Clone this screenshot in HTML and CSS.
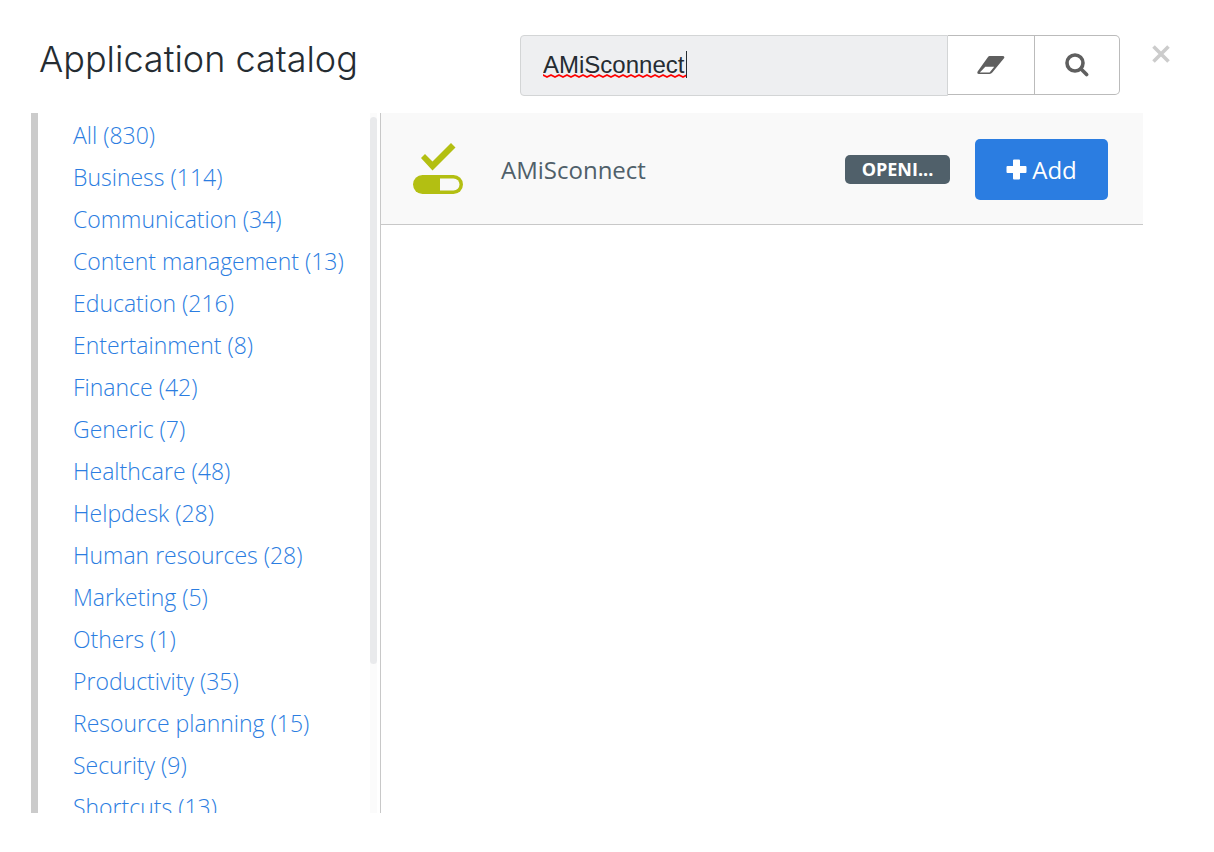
FILE: index.html
```html
<!DOCTYPE html>
<html lang="en">
<head>
    <meta charset="UTF-8">
    <meta name="viewport" content="width=device-width, initial-scale=1.0">
    <title>Application catalog</title>
    <link rel="stylesheet" href="styles.css">
</head>
<body>

    <div class="catalog">
        <header class="catalog-header">
            <h1>Application catalog</h1>
            <form class="search" role="search">
                <div class="search-field">
                    <input type="text" class="search-input" aria-label="Search applications" value="AMiSconnect">
                    <svg class="squiggle" aria-hidden="true">
                        <defs>
                            <pattern id="wave" width="8" height="4" patternUnits="userSpaceOnUse">
                                <path d="M-4 3L0 1L4 3L8 1L12 3" fill="none" stroke="#f00" stroke-width="1.8" stroke-linejoin="round"/>
                            </pattern>
                        </defs>
                        <rect width="100%" height="4" fill="url(#wave)"/>
                    </svg>
                    <span class="caret"></span>
                </div>
                <button type="button" class="search-btn" aria-label="Clear">
                    <svg width="28" height="20" viewBox="0 0 28 20">
                        <path d="M12.6 1H25.5Q28.4 1.2 26.8 3.6L15.3 17.6Q14.2 19 12.5 19H2Q-.6 18.6.8 16.2L11 2Q11.7 1 12.6 1ZM8.3 11.7L2.8 17.5H12.6L17.2 11.7Z" fill="#5f5f5f" fill-rule="evenodd"/>
                    </svg>
                </button>
                <button type="submit" class="search-btn search-btn-last" aria-label="Search">
                    <svg width="24" height="24" viewBox="0 0 24 24" fill="none" stroke="#5f5f5f">
                        <circle cx="10" cy="10" r="8" stroke-width="3.6"/>
                        <path d="M15.8 15.8L21.6 21.6" stroke-width="3.6" stroke-linecap="round"/>
                    </svg>
                </button>
            </form>
            <button type="button" class="close-btn" aria-label="Close">
                <svg width="18" height="18" viewBox="0 0 18 18">
                    <path d="M1.5 1.5L16.5 16.5M16.5 1.5L1.5 16.5" stroke="#ccc" stroke-width="3.6"/>
                </svg>
            </button>
        </header>

        <div class="catalog-body">
            <nav class="categories" aria-label="Categories">
                <ul class="category-list">
                    <li><a href="#">All (830)</a></li>
                    <li><a href="#">Business (114)</a></li>
                    <li><a href="#">Communication (34)</a></li>
                    <li><a href="#">Content management (13)</a></li>
                    <li><a href="#">Education (216)</a></li>
                    <li><a href="#">Entertainment (8)</a></li>
                    <li><a href="#">Finance (42)</a></li>
                    <li><a href="#">Generic (7)</a></li>
                    <li><a href="#">Healthcare (48)</a></li>
                    <li><a href="#">Helpdesk (28)</a></li>
                    <li><a href="#">Human resources (28)</a></li>
                    <li><a href="#">Marketing (5)</a></li>
                    <li><a href="#">Others (1)</a></li>
                    <li><a href="#">Productivity (35)</a></li>
                    <li><a href="#">Resource planning (15)</a></li>
                    <li><a href="#">Security (9)</a></li>
                    <li><a href="#">Shortcuts (13)</a></li>
                </ul>
                <div class="scroll-track"><div class="scroll-thumb"></div></div>
            </nav>

            <main class="results">
                <div class="app-row">
                    <svg class="app-icon" width="50" height="52" viewBox="0 0 50 52">
                        <path d="M8 15L12 11L19.5 18.5L38 0L42.5 4.5L19.5 27.5Z" fill="#b3bf12"/>
                        <rect y="32" width="50" height="19" rx="9.5" fill="#b3bf12"/>
                        <path d="M27 35.5H40.5A6 6 0 0 1 40.5 47.5H27Z" fill="#f9f9f9"/>
                    </svg>
                    <span class="app-name">AMiSconnect</span>
                    <span class="app-tag">OPENI...</span>
                    <button type="button" class="add-btn">
                        <svg width="21" height="21" viewBox="0 0 21 21">
                            <path d="M8 .5H13Q14 .5 14 1.5V7H19.5Q20.5 7 20.5 8V13Q20.5 14 19.5 14H14V19.5Q14 20.5 13 20.5H8Q7 20.5 7 19.5V14H1.5Q.5 14 .5 13V8Q.5 7 1.5 7H7V1.5Q7 .5 8 .5Z" fill="#fff"/>
                        </svg>
                        Add
                    </button>
                </div>
            </main>
        </div>
    </div>

</body>
</html>
```
FILE: styles.css
```css
* {
    box-sizing: border-box;
}
body {
    margin: 0;
    background-color: #fff;
    font-family: "Open Sans", "Noto Sans", sans-serif;
    font-size: 24px;
    color: #50606a;
}
button {
    font-family: inherit;
    cursor: pointer;
}
.catalog {
    display: flex;
    flex-direction: column;
    height: 100vh;
    padding: 35px 40px 39px 31px;
}
/* Header */
.catalog-header {
    display: flex;
    align-items: flex-start;
    padding-left: 8px;
    margin-bottom: 17px;
}
h1 {
    flex: 1;
    margin: 0;
    font-family: Inter, sans-serif;
    font-size: 36px;
    line-height: 48px;
    font-weight: 300;
    color: #252c32;
}
.search {
    display: flex;
    align-items: flex-start;
    width: 600px;
}
.search-field {
    position: relative;
    flex: 1;
}
.search-input {
    display: block;
    width: 100%;
    height: 61px;
    padding: 0 22px 2px;
    border: 1px solid #d3d5d6;
    border-radius: 4px 0 0 4px;
    background-color: #eeeff1;
    font-family: "Liberation Sans", Arial, sans-serif;
    font-size: 24px;
    color: #252c32;
    outline: none;
}
/* Spelling mark and caret over the typed text */
.squiggle {
    position: absolute;
    left: 23px;
    top: 39px;
    width: 144px;
    height: 4px;
}
.caret {
    position: absolute;
    left: 166px;
    top: 16px;
    width: 1px;
    height: 27px;
    background-color: #252c32;
}
.search-btn {
    display: flex;
    align-items: center;
    justify-content: center;
    width: 87px;
    height: 60px;
    padding: 0;
    border: 1px solid #bbb;
    border-left: none;
    background-color: #fff;
}
.search-btn-last {
    width: 85px;
    border-radius: 0 5px 5px 0;
}
.close-btn {
    display: flex;
    margin: 10px 4px 0 32px;
    padding: 0;
    border: none;
    background: none;
}
/* Body */
.catalog-body {
    display: flex;
    flex: 1;
    min-height: 0;
    margin-right: 31px;
}
.categories {
    display: flex;
    width: 349px;
    padding-right: 3px;
    border-left: 7px solid #cbcbcb;
    overflow: hidden;
}
.category-list {
    flex: 1;
    margin: 0;
    padding: 1px 0 0 35px;
    list-style: none;
    white-space: nowrap;
}
.category-list a {
    display: block;
    font-size: 23px;
    font-weight: 300;
    line-height: 42px;
    color: #2b7de1;
    text-decoration: none;
}
.category-list a:hover {
    text-decoration: underline;
}
.scroll-track {
    width: 7px;
    padding-top: 4px;
    background-color: #fbfbfb;
}
.scroll-thumb {
    height: calc(79% - 3px);
    border-radius: 4px;
    background-color: #e9eaec;
}
.results {
    flex: 1;
    border-left: 1px solid #c8c8c8;
}
.app-row {
    display: flex;
    align-items: center;
    height: 112px;
    padding: 1px 35px 0 32px;
    border-bottom: 1px solid #c8c8c8;
    background-color: #f9f9f9;
}
.app-name {
    flex: 1;
    margin-left: 38px;
}
.app-tag {
    width: 105px;
    margin-right: 25px;
    border-radius: 5px;
    background-color: #50606a;
    font-size: 18px;
    line-height: 29px;
    font-weight: 700;
    text-align: center;
    color: #fff;
}
.add-btn {
    display: flex;
    align-items: center;
    justify-content: center;
    gap: 5px;
    width: 133px;
    height: 61px;
    border: none;
    border-radius: 5px;
    background-color: #2b7de1;
    font-size: 24px;
    color: #fff;
}
```
